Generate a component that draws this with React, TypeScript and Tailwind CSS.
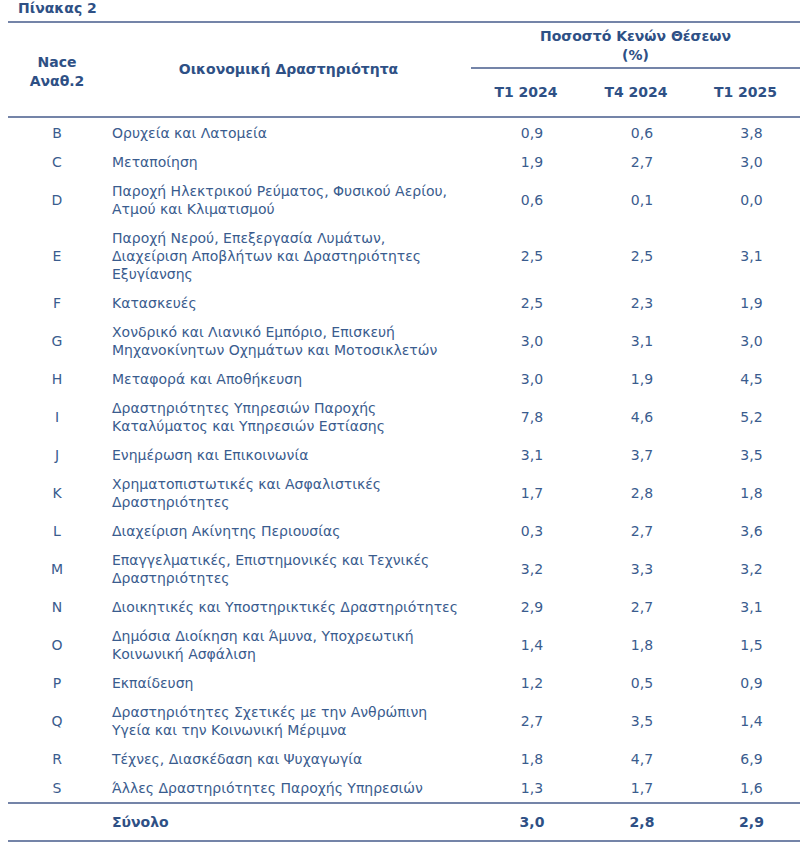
import { Fragment } from 'react'

type Row = {
  code: string
  lines: string[]
  values: [string, string, string]
}

const ROWS: Row[] = [
  { code: 'B', lines: ['Ορυχεία και Λατομεία'], values: ['0,9', '0,6', '3,8'] },
  { code: 'C', lines: ['Μεταποίηση'], values: ['1,9', '2,7', '3,0'] },
  {
    code: 'D',
    lines: ['Παροχή Ηλεκτρικού Ρεύματος, Φυσικού Αερίου,', 'Ατμού και Κλιματισμού'],
    values: ['0,6', '0,1', '0,0'],
  },
  {
    code: 'E',
    lines: [
      'Παροχή Νερού, Επεξεργασία Λυμάτων,',
      'Διαχείριση Αποβλήτων και Δραστηριότητες',
      'Εξυγίανσης',
    ],
    values: ['2,5', '2,5', '3,1'],
  },
  { code: 'F', lines: ['Κατασκευές'], values: ['2,5', '2,3', '1,9'] },
  {
    code: 'G',
    lines: ['Χονδρικό και Λιανικό Εμπόριο, Επισκευή', 'Μηχανοκίνητων Οχημάτων και Μοτοσικλετών'],
    values: ['3,0', '3,1', '3,0'],
  },
  { code: 'H', lines: ['Μεταφορά και Αποθήκευση'], values: ['3,0', '1,9', '4,5'] },
  {
    code: 'I',
    lines: ['Δραστηριότητες Υπηρεσιών Παροχής', 'Καταλύματος και Υπηρεσιών Εστίασης'],
    values: ['7,8', '4,6', '5,2'],
  },
  { code: 'J', lines: ['Ενημέρωση και Επικοινωνία'], values: ['3,1', '3,7', '3,5'] },
  {
    code: 'K',
    lines: ['Χρηματοπιστωτικές και Ασφαλιστικές', 'Δραστηριότητες'],
    values: ['1,7', '2,8', '1,8'],
  },
  { code: 'L', lines: ['Διαχείριση Ακίνητης Περιουσίας'], values: ['0,3', '2,7', '3,6'] },
  {
    code: 'M',
    lines: ['Επαγγελματικές, Επιστημονικές και Τεχνικές', 'Δραστηριότητες'],
    values: ['3,2', '3,3', '3,2'],
  },
  {
    code: 'N',
    lines: ['Διοικητικές και Υποστηρικτικές Δραστηριότητες'],
    values: ['2,9', '2,7', '3,1'],
  },
  {
    code: 'O',
    lines: ['Δημόσια Διοίκηση και Άμυνα, Υποχρεωτική', 'Κοινωνική Ασφάλιση'],
    values: ['1,4', '1,8', '1,5'],
  },
  { code: 'P', lines: ['Εκπαίδευση'], values: ['1,2', '0,5', '0,9'] },
  {
    code: 'Q',
    lines: ['Δραστηριότητες Σχετικές με την Ανθρώπινη', 'Υγεία και την Κοινωνική Μέριμνα'],
    values: ['2,7', '3,5', '1,4'],
  },
  { code: 'R', lines: ['Τέχνες, Διασκέδαση και Ψυχαγωγία'], values: ['1,8', '4,7', '6,9'] },
  {
    code: 'S',
    lines: ['Άλλες Δραστηριότητες Παροχής Υπηρεσιών'],
    values: ['1,3', '1,7', '1,6'],
  },
]

const TOTAL: [string, string, string] = ['3,0', '2,8', '2,9']
const PERIODS = ['T1 2024', 'T4 2024', 'T1 2025']

// column widths: code | activity | three periods
const COLS = 'grid grid-cols-[98px_365px_110px_110px_109px]'

export default function App() {
  return (
    <div
      className="w-[800px] bg-white pb-[6px] text-[14px] leading-[18px] text-[#3a5c8e]"
      style={{ fontFamily: '"DejaVu Sans", Verdana, sans-serif' }}
    >
      <div className="h-[21px] pl-[18px] text-[14px] font-bold leading-[16px] text-[#2e5085]">
        Πίνακας 2
      </div>

      <div className="ml-[8px] border-t-2 border-[#7484a8]">
        {/* Header */}
        <div className={`${COLS} border-b-2 border-[#7484a8] text-[14px] leading-[19px] font-bold text-[#2e5085]`}>
          <div className="row-span-2 flex items-center justify-center pt-[4px] text-center">
            Nace
            <br />
            Αναθ.2
          </div>
          <div className="row-span-2 flex items-center justify-center">
            Οικονομική Δραστηριότητα
          </div>
          <div className="col-span-3 flex h-[46px] items-center justify-center border-b-2 border-[#7484a8] pt-[2px] text-center">
            Ποσοστό Κενών Θέσεων
            <br />
            (%)
          </div>
          {PERIODS.map((p) => (
            <div key={p} className="flex h-[47px] items-center justify-center">
              {p}
            </div>
          ))}
        </div>

        {/* Body */}
        <div>
          {ROWS.map((row) => (
            <div key={row.code} className={`${COLS} pt-[6px] pb-[5px]`}>
              <div className="flex items-center justify-center">{row.code}</div>
              <div className="whitespace-nowrap pl-[6px]">
                {row.lines.map((line, i) => (
                  <Fragment key={i}>
                    {i > 0 && <br />}
                    {line}
                  </Fragment>
                ))}
              </div>
              {row.values.map((v, i) => (
                <div key={i} className="flex items-center justify-center pl-[12px]">
                  {v}
                </div>
              ))}
            </div>
          ))}
        </div>

        {/* Total */}
        <div className={`${COLS} h-[40px] items-center border-y-2 border-[#7484a8] text-[14px] font-bold text-[#2e5085]`}>
          <div />
          <div className="pl-[6px]">Σύνολο</div>
          {TOTAL.map((v, i) => (
            <div key={i} className="flex justify-center pl-[12px]">
              {v}
            </div>
          ))}
        </div>
      </div>
    </div>
  )
}
